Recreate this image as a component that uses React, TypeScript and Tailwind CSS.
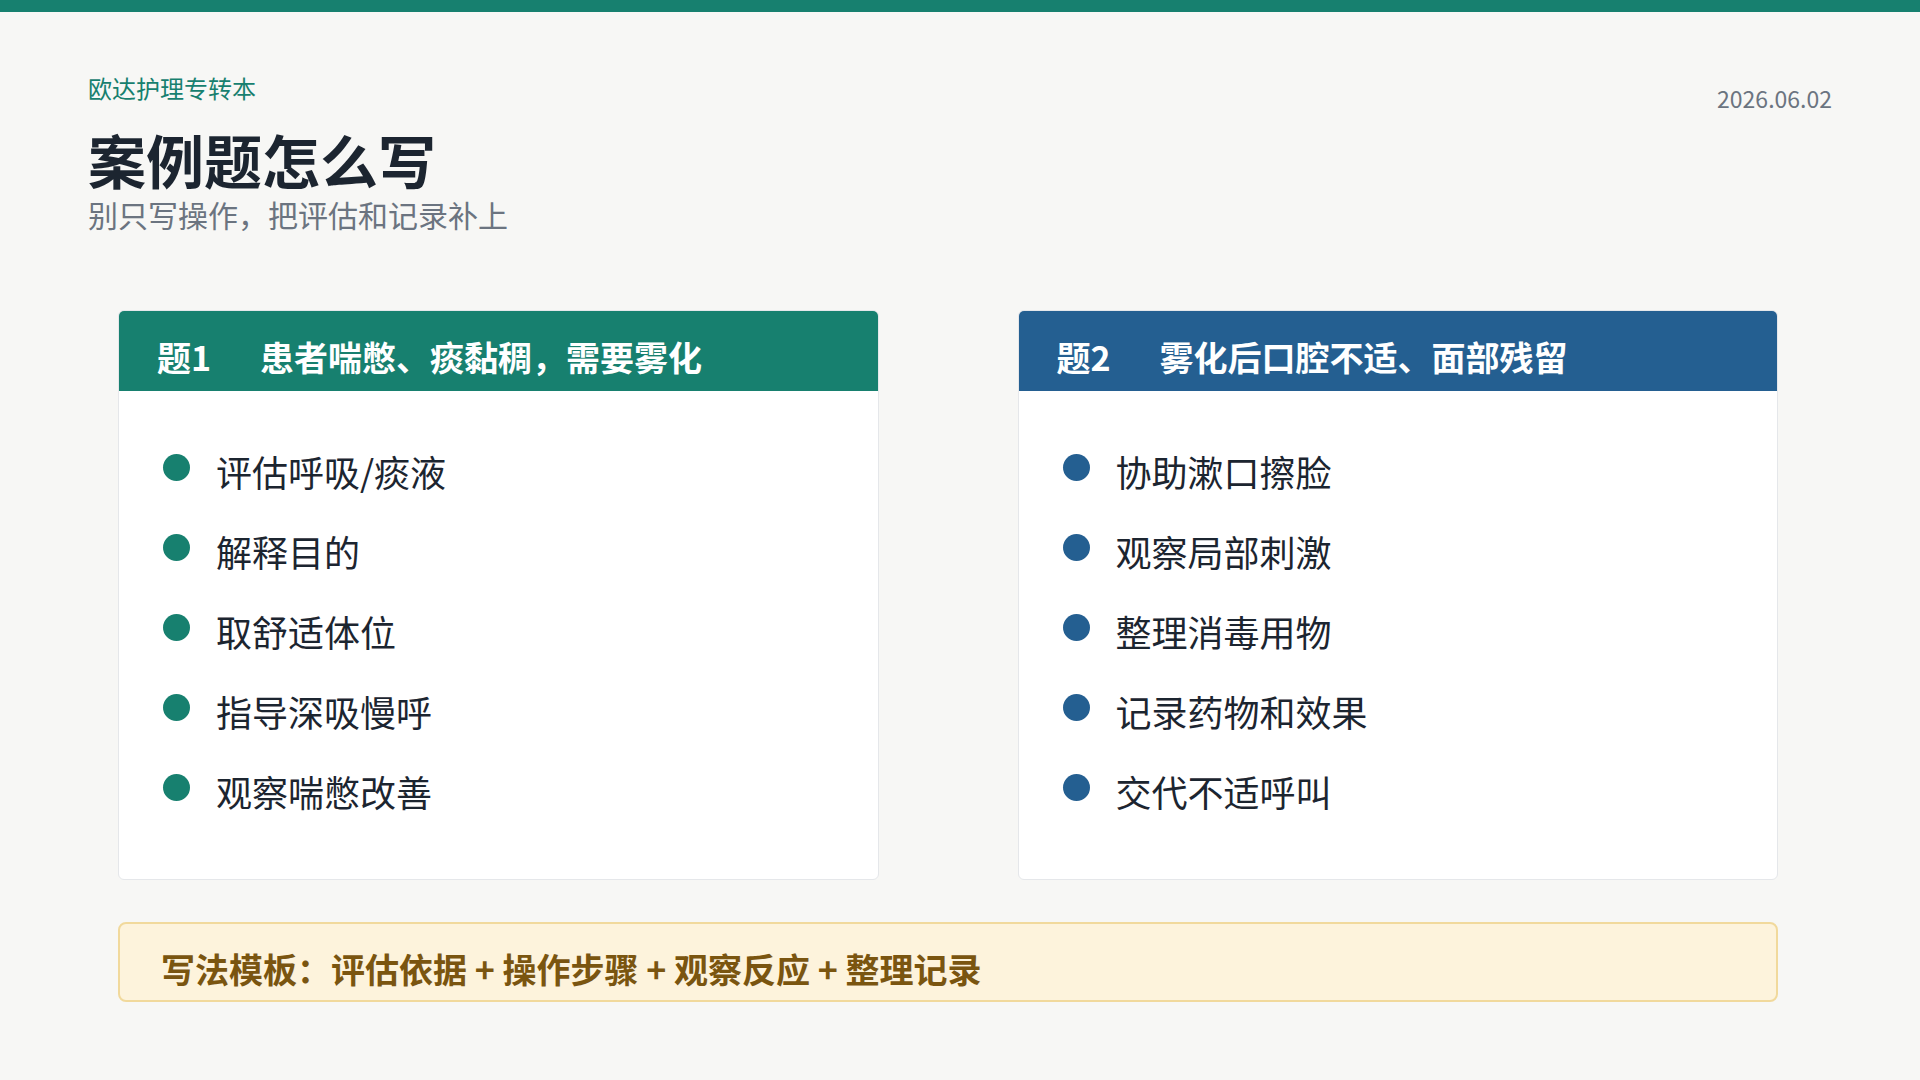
export default function App() {
  const f = { fontFamily: '"Noto Sans CJK SC", "Noto Sans", sans-serif' };
  const cards = [
    { tag: "题1", title: "患者喘憋、痰黏稠，需要雾化", color: "bg-[#17806f]", dot: "bg-[#17806f]", items: ["评估呼吸/痰液", "解释目的", "取舒适体位", "指导深吸慢呼", "观察喘憋改善"] },
    { tag: "题2", title: "雾化后口腔不适、面部残留", color: "bg-[#245f91]", dot: "bg-[#245f91]", items: ["协助漱口擦脸", "观察局部刺激", "整理消毒用物", "记录药物和效果", "交代不适呼叫"] },
  ];
  return (
    <div style={f} className="w-[1920px] h-[1080px] bg-[#f7f7f5] flex flex-col overflow-hidden">
      <div className="h-[12px] bg-[#17806f]" />
      <div className="flex justify-between px-[88px] pt-[61px]">
        <div className="flex flex-col">
          <div className="text-[24px] leading-[30px] text-[#17806f]">欧达护理专转本</div>
          <div className="text-[58px] leading-[64px] font-bold text-[#1c2530] mt-[24px]">案例题怎么写</div>
          <div className="text-[30px] leading-[36px] text-[#6b7480] mt-[5px]">别只写操作，把评估和记录补上</div>
        </div>
        <div className="text-[23px] leading-[32px] text-[#6b7480] mt-[9px]">2026.06.02</div>
      </div>
      <div className="grid grid-cols-2 gap-[139px] px-[118px] mt-[78px] pr-[142px]">
        {cards.map((c) => (
          <div key={c.tag} className="bg-white border border-[#e5e7ea] rounded-[6px] overflow-hidden h-[570px]">
            <div className={`${c.color} h-[80px] flex items-end pb-[9px] pl-[38px] text-white text-[34px] font-bold`}>
              <span className="w-[103px]">{c.tag}</span>
              <span>{c.title}</span>
            </div>
            <div className="flex flex-col pt-[54px] pl-[44px]">
              {c.items.map((t) => (
                <div key={t} className="h-[80px] flex items-start">
                  <div className={`${c.dot} w-[27px] h-[27px] rounded-full mt-[9px]`} />
                  <span className="ml-[26px] text-[36px] leading-[52px] text-[#1c2530]">{t}</span>
                </div>
              ))}
            </div>
          </div>
        ))}
      </div>
      <div className="mx-[118px] mr-[142px] mt-[42px] h-[80px] bg-[#fdf3dc] border-2 border-[#f1d99c] rounded-[8px] flex items-end pb-[6px] pl-[41px] text-[34px] font-bold text-[#7a5510]">
        写法模板：评估依据 + 操作步骤 + 观察反应 + 整理记录
      </div>
    </div>
  );
}
